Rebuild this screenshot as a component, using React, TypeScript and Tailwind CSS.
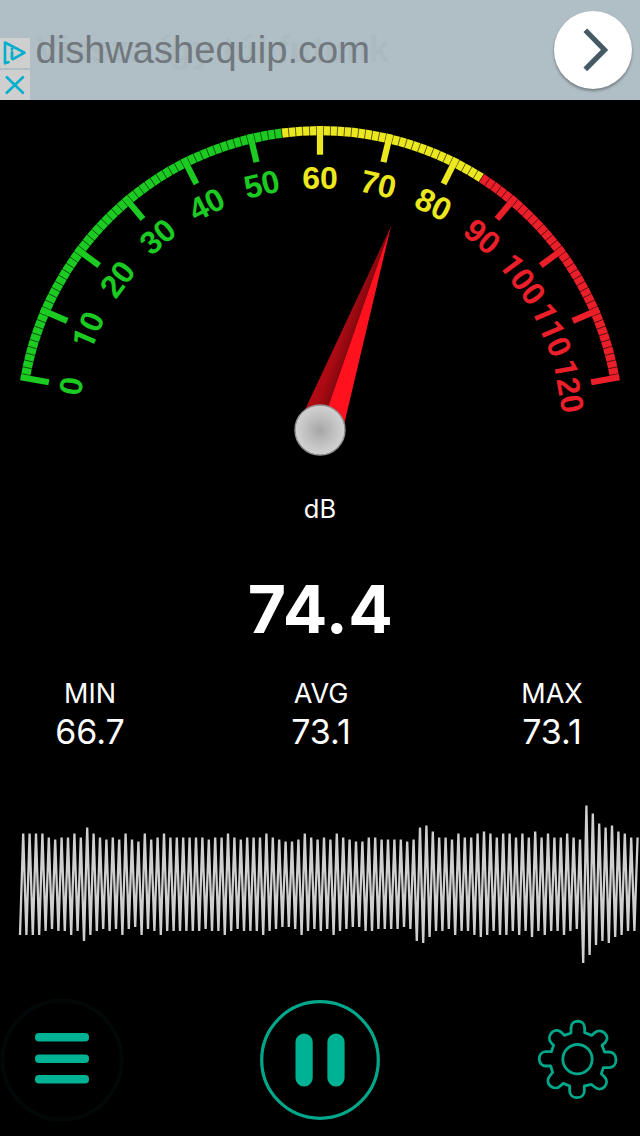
const CENTER_X = 320;
const CENTER_Y = 330;
const OUTER_R = 304;
const INNER_R = 294.6;
const TICK_R = 275.3;
const LABEL_R = 241.5;

const GREEN = '#1bcb21';
const YELLOW = '#ece81f';
const RED = '#eb1f2a';

// 0 dB sits at -80deg and 120 dB at +80deg
const toAngle = (db: number) => (db * 160) / 120 - 80;

const point = (db: number, r: number) => {
  const rad = (toAngle(db) * Math.PI) / 180;
  return `${(CENTER_X + r * Math.sin(rad)).toFixed(2)} ${(CENTER_Y - r * Math.cos(rad)).toFixed(2)}`;
};

const bands = [
  { from: 0, to: 54.5, color: GREEN },
  { from: 54.5, to: 84.5, color: YELLOW },
  { from: 84.5, to: 120, color: RED },
];

const colorFor = (db: number) => (db < 54.5 ? GREEN : db < 84.5 ? YELLOW : RED);

const majors = Array.from({ length: 13 }, (_, i) => i * 10);
const separators = Array.from({ length: 120 }, (_, i) => i + 0.5);

// Amplitude of every cycle of the wave, oldest first
const samples = [
  51, 51, 51, 51, 47, 45, 47, 47, 51, 47, 57, 51, 47, 45, 47, 45, 51, 45, 43, 51,
  45, 47, 51, 47, 47, 47, 47, 47, 47, 45, 47, 47, 51, 47, 45, 47, 47, 47, 51, 47,
  45, 43, 43, 45, 51, 47, 45, 47, 45, 51, 47, 45, 43, 43, 47, 47, 45, 45, 45, 45,
  43, 45, 57, 59, 53, 47, 47, 45, 51, 47, 47, 51, 53, 51, 47, 51, 51, 47, 51, 47,
  53, 47, 51, 47, 47, 51, 47, 45, 79, 71, 61, 57, 59, 53, 51, 47, 47,
];

const wavePoints = samples
  .map((a, i) => `${(20 + i * 6.4).toFixed(1)},${94 + a} ${(23.2 + i * 6.4).toFixed(1)},${94.5 - a}`)
  .join(' ');

const stats = [
  { label: 'MIN', value: '66.7' },
  { label: 'AVG', value: '73.1' },
  { label: 'MAX', value: '73.1' },
];

function AdBanner() {
  return (
    <div className="relative h-[100px] bg-[#b0bec5] overflow-hidden font-['Liberation_Sans',sans-serif]">
      {/* Previous line of the ad, almost faded out */}
      <div className="absolute left-[36px] top-[28px] text-[36.6px] leading-[44px] font-bold text-[#abb9c0] whitespace-nowrap">
        Vissza így túl futunk
      </div>
      <div className="relative pl-[35.5px] pt-[28px] text-[38.1px] leading-[44px] text-[#70787d] whitespace-nowrap">
        dishwashequip.com
      </div>

      {/* Ad choices */}
      <div className="absolute left-0 top-[38px] flex flex-col gap-[2px]">
        <div className="w-[30px] h-[30px] bg-[#cfcfcf]">
          <svg width="30" height="30" viewBox="0 0 30 30" fill="none" stroke="#00aecd" strokeWidth="2.6" strokeLinejoin="round" strokeLinecap="round">
            <path d="M8.5 24.2 L5 25.3 V4.5 L24.5 14.7 L13 21.2" />
            <path d="M12 14.5 V20.5 M12 11 V11.4" strokeWidth="2.8" />
          </svg>
        </div>
        <div className="w-[30px] h-[30px] bg-[#cfcfcf]">
          <svg width="30" height="30" viewBox="0 0 30 30" fill="none" stroke="#00aecd" strokeWidth="2.5">
            <path d="M6 6.5 L23.7 23.5 M23.7 6.5 L6 23.5" />
          </svg>
        </div>
      </div>

      <button className="absolute left-[554px] top-[11px] w-[78px] h-[78px] rounded-full bg-white shadow-[0_2px_3px_rgba(0,0,0,0.35)]">
        <svg width="78" height="78" viewBox="0 0 78 78" fill="none" stroke="#455a64" strokeWidth="5.2">
          <path d="M31.3 19.2 L50.6 38.9 L31.3 58.4" />
        </svg>
      </button>
    </div>
  );
}

function Gauge({ value }: { value: number }) {
  return (
    <svg className="block" width="640" height="370" viewBox="0 0 640 370">
      <defs>
        <linearGradient id="needleDark" x1="0" y1="0" x2="1" y2="0">
          <stop offset="0" stopColor="#b80a14" />
          <stop offset="0.5" stopColor="#ab0a13" />
          <stop offset="1" stopColor="#86080f" />
        </linearGradient>
        <radialGradient id="hub">
          <stop offset="0" stopColor="#a6a6a6" />
          <stop offset="0.6" stopColor="#c2c2c2" />
          <stop offset="1" stopColor="#d2d2d2" />
        </radialGradient>
      </defs>

      {bands.map((b) => (
        <path
          key={b.color}
          fill={b.color}
          d={`M${point(b.from, OUTER_R)} A${OUTER_R} ${OUTER_R} 0 0 1 ${point(b.to, OUTER_R)} L${point(b.to, INNER_R)} A${INNER_R} ${INNER_R} 0 0 0 ${point(b.from, INNER_R)} Z`}
        />
      ))}
      {separators.map((db) => (
        <path key={db} d={`M${point(db, OUTER_R + 1)} L${point(db, INNER_R - 1)}`} stroke="#000" strokeOpacity="0.75" strokeWidth="0.8" />
      ))}

      {majors.map((db) => (
        <g key={db}>
          <path d={`M${point(db, OUTER_R)} L${point(db, TICK_R)}`} stroke={colorFor(db)} strokeWidth="6.2" />
          <text
            x={CENTER_X}
            y={CENTER_Y - LABEL_R}
            transform={`rotate(${toAngle(db)} ${CENTER_X} ${CENTER_Y})`}
            textAnchor="middle"
            fill={colorFor(db)}
            className="text-[32px] font-bold font-['Liberation_Sans',sans-serif]"
          >
            {String(db).split('').map((c, i) => (
              <tspan key={i} className={c === '1' ? "font-['Roboto',sans-serif]" : undefined}>{c}</tspan>
            ))}
          </text>
        </g>
      ))}

      {/* Needle */}
      <g transform={`translate(${CENTER_X} ${CENTER_Y}) rotate(${toAngle(value)})`}>
        <path d="M0 -216 L-22.3 0 H0 Z" fill="url(#needleDark)" />
        <path d="M0 -216 L22.3 0 H0 Z" fill="#ff121e" />
      </g>
      <circle cx={CENTER_X} cy={CENTER_Y} r="25" fill="url(#hub)" stroke="#929292" strokeWidth="1.4" />
    </svg>
  );
}

function MenuIcon() {
  return (
    <svg width="124" height="128" viewBox="0 0 124 128">
      <circle cx="62" cy="64" r="59.5" fill="none" stroke="#020707" strokeWidth="4" />
      <g fill="#00b294">
        <rect x="35" y="37" width="54" height="8.4" rx="4" />
        <rect x="35" y="58.6" width="54" height="8.4" rx="4" />
        <rect x="35" y="79" width="54" height="8.4" rx="4" />
      </g>
    </svg>
  );
}

function PauseIcon() {
  return (
    <svg width="120" height="120" viewBox="0 0 120 120">
      <circle cx="60" cy="60" r="58.3" fill="none" stroke="#00a78b" strokeWidth="3.2" />
      <rect x="35.5" y="33.6" width="17.2" height="53" rx="8.6" fill="#00b294" />
      <rect x="67.4" y="33.6" width="17.2" height="53" rx="8.6" fill="#00b294" />
    </svg>
  );
}

function GearIcon() {
  return (
    <svg width="120" height="120" viewBox="0 0 360 360" fill="none" stroke="#00a78b" strokeWidth="8.5" strokeLinejoin="round">
      <circle cx="172.5" cy="177.5" r="44" />
      <path d="M153 99 V84 C153 57 194 57 194 84 V98 L215 106 L222 100 C242 80 274 108 256 127 L246 136 L254 156 H267 C295 156 295 203 267 203 H250 L244 221 L254 231 C272 252 244 279 224 261 L214 253 L193 258 V272 C193 300 149 300 149 272 V258 L130 250 L122 257 C102 277 70 249 90 227 L98 217 L92 198 H78 C51 198 51 155 78 155 H94 L101 136 L94 129 C76 109 104 78 124 97 L133 106 Z" />
    </svg>
  );
}

export default function App() {
  return (
    <div className="w-[640px] h-[1136px] bg-black text-white overflow-hidden flex flex-col font-['Inter',sans-serif]">
      <AdBanner />
      <Gauge value={74.4} />

      {/* Current reading */}
      <div className="mt-[19px] h-10 leading-10 text-center text-[25.5px]">dB</div>
      <div className="mt-10 pl-[1px] h-[80px] leading-[80px] text-center text-[66px] tracking-[0.5px] font-bold">74.4</div>

      <div className="mt-[25px] pl-5 pr-[18px] flex justify-between">
        {stats.map((s) => (
          <div key={s.label} className="w-[140px] text-center">
            <div className="h-[40px] leading-[40px] text-[27px]">{s.label}</div>
            <div className="h-[36px] leading-[36px] text-[34px]">{s.value}</div>
          </div>
        ))}
      </div>

      {/* Sound wave */}
      <svg className="mt-10 block shrink-0" width="640" height="190" viewBox="0 0 640 190">
        <polyline points={wavePoints} fill="none" stroke="#cfcfcf" strokeWidth="2.3" strokeLinejoin="bevel" />
      </svg>

      {/* Controls */}
      <div className="mt-4 h-[128px] shrink-0 flex items-center">
        <button className="w-[124px]"><MenuIcon /></button>
        <button className="ml-[136px]"><PauseIcon /></button>
        <button className="ml-[140px]"><GearIcon /></button>
      </div>
    </div>
  );
}
